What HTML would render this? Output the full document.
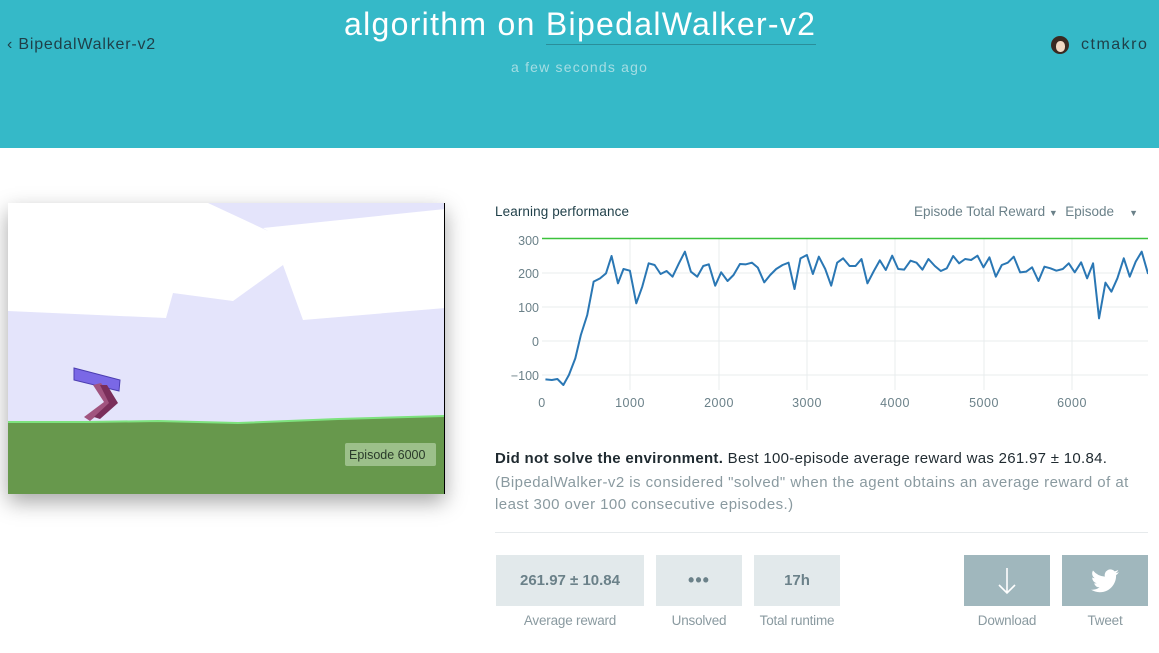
<!DOCTYPE html>
<html><head><meta charset="utf-8"><style>
*{margin:0;padding:0;box-sizing:border-box}
body{width:1159px;height:653px;overflow:hidden;background:#fff;font-family:"Liberation Sans",sans-serif;position:relative}
.hdr{position:absolute;left:0;top:0;width:1159px;height:148px;background:#35b9c8}
.abs{position:absolute;white-space:nowrap}
.box{position:absolute;top:555px;height:51px;background:#e2e9eb;color:#6b8189;font-size:15px;font-weight:bold;display:flex;align-items:center;justify-content:center}
.btn{position:absolute;top:555px;height:51px;background:#a0b7bd;display:flex;align-items:center;justify-content:center}
.lbl{position:absolute;top:613px;font-size:13.5px;color:#8a9aa0;text-align:center;letter-spacing:-0.2px}
</style></head><body>
<div class="hdr"></div>
<div class="abs" style="left:7px;top:36px;font-size:16px;color:#1f3f48;letter-spacing:0.8px">‹ BipedalWalker-v2</div>
<div class="abs" style="left:344px;top:6px;font-size:32px;color:#fff;letter-spacing:1.3px">algorithm on <span style="border-bottom:1px solid #2a8e9a;padding-bottom:2px">BipedalWalker-v2</span></div>
<div class="abs" style="left:511px;top:59px;font-size:14px;color:#a5dde3;letter-spacing:1.2px">a few seconds ago</div>
<div class="abs" style="left:1051px;top:36px;width:18px;height:18px;border-radius:50%;background:#3a2a22;overflow:hidden"><div style="position:absolute;left:5px;top:5px;width:9px;height:11px;border-radius:45%;background:#f1d9c4"></div></div>
<div class="abs" style="left:1081px;top:36px;font-size:16px;color:#1f3f48;letter-spacing:1.5px">ctmakro</div>

<div class="abs" style="left:8px;top:203px;width:437px;height:291px;box-shadow:0 8px 20px rgba(0,0,0,0.35);overflow:hidden;background:#e4e4fb;border-right:1px solid #000">
<svg width="437" height="291" viewBox="0 0 437 291" style="position:absolute;left:0;top:0">
<polygon points="0,0 200,0 260,28 255,25 437,6 437,105 295,117 275,62 225,98 165,90 158,115 0,108" fill="#fff"/>
<polygon points="0,219 80,219 150,218 230,220 330,216 437,213 437,291 0,291" fill="#67984c"/>
<polyline points="0,219 80,219 150,218 230,220 330,216 437,213" fill="none" stroke="#7ee27e" stroke-width="2"/>
<polygon points="66,165 112,177 111,188 66,177" fill="#7a68e6" stroke="#4b3db0" stroke-width="1"/>
<polygon points="85,182 93,180 106,198 82,218 76,214 96,199" fill="#a1547f"/>
<polygon points="92,182 99,182 110,200 92,216 86,214 101,200" fill="#7a2e5a"/>
<rect x="337" y="240" width="91" height="23" rx="2" fill="#9cc08a"/>
<text x="341" y="256" font-family="Liberation Sans" font-size="12.5" fill="#2a3a2a">Episode 6000</text>
</svg></div>

<div class="abs" style="left:495px;top:204px;font-size:13.5px;color:#1f3f48;letter-spacing:0.1px">Learning performance</div>
<div class="abs" style="left:914px;top:204px;font-size:13.5px;color:#6b8189;letter-spacing:0px">Episode Total Reward <span style="font-size:9px">▼</span>&nbsp; Episode &nbsp;&nbsp;&nbsp;<span style="font-size:9px">▼</span></div>
<svg class="abs" style="left:0;top:0" width="1159" height="420">
<defs><clipPath id="c"><rect x="530" y="230" width="618" height="170"/></clipPath></defs>
<g stroke="#e8ecee" stroke-width="1">
<line x1="542" y1="273" x2="1148" y2="273"/><line x1="542" y1="307" x2="1148" y2="307"/><line x1="542" y1="341" x2="1148" y2="341"/><line x1="542" y1="375" x2="1148" y2="375"/>
<line x1="630" y1="238" x2="630" y2="390"/><line x1="719" y1="238" x2="719" y2="390"/><line x1="807" y1="238" x2="807" y2="390"/><line x1="895" y1="238" x2="895" y2="390"/><line x1="984" y1="238" x2="984" y2="390"/><line x1="1072" y1="238" x2="1072" y2="390"/>
</g>
<line x1="542" y1="238.5" x2="1148" y2="238.5" stroke="#3cc23c" stroke-width="1.6"/>
<g font-family="Liberation Sans" font-size="12.5" fill="#6b8189" text-anchor="end">
<text x="539" y="245">300</text><text x="539" y="278">200</text><text x="539" y="312">100</text><text x="539" y="346">0</text><text x="539" y="380">−100</text>
</g>
<g font-family="Liberation Sans" font-size="12.5" fill="#6b8189" text-anchor="middle" letter-spacing="0.5">
<text x="542" y="407">0</text><text x="630" y="407">1000</text><text x="719" y="407">2000</text><text x="807" y="407">3000</text><text x="895" y="407">4000</text><text x="984" y="407">5000</text><text x="1072" y="407">6000</text>
</g>
<g clip-path="url(#c)"><g transform="translate(490,195) scale(0.4265,0.33333)">
<polyline fill="none" stroke="#2a77b4" stroke-width="2" vector-effect="non-scaling-stroke" stroke-linejoin="round" points="130,553 145,555 158,552 172,570 185,540 200,490 213,420 228,360 243,260 258,250 272,235 285,183 300,265 313,222 328,227 343,325 357,275 372,205 386,210 400,237 414,228 428,245 443,205 457,170 471,230 486,245 500,213 513,208 528,272 542,232 557,258 571,240 586,207 600,208 614,203 628,218 643,262 657,240 671,222 686,210 700,203 714,282 728,190 743,180 757,237 771,185 786,222 800,272 814,203 828,190 843,213 857,213 871,192 885,265 900,228 914,196 928,225 943,182 957,222 971,224 986,197 1000,203 1014,224 1028,192 1043,213 1057,228 1071,220 1086,183 1100,205 1114,192 1128,195 1143,182 1157,217 1171,187 1186,245 1200,210 1214,203 1228,185 1243,232 1257,230 1271,217 1286,258 1300,215 1314,220 1328,227 1343,222 1357,205 1371,232 1386,202 1400,250 1414,205 1428,370 1443,263 1457,290 1471,250 1486,190 1500,245 1514,200 1528,170 1543,237"/>
</g></g>
</svg>

<div class="abs" style="left:495px;top:450px;font-size:15px;color:#1f2a30;letter-spacing:0.3px"><b>Did not solve the environment.</b> Best 100-episode average reward was 261.97 ± 10.84.</div>
<div class="abs" style="left:495px;top:472px;font-size:15px;color:#8a9aa0;letter-spacing:0.45px;line-height:22px">(BipedalWalker-v2 is considered "solved" when the agent obtains an average reward of at<br>least 300 over 100 consecutive episodes.)</div>
<div class="abs" style="left:495px;top:532px;width:653px;height:1px;background:#e6eaec"></div>

<div class="box" style="left:496px;width:148px;letter-spacing:0px">261.97 ± 10.84</div>
<div class="box" style="left:656px;width:86px;font-size:18px;letter-spacing:1px">•••</div>
<div class="box" style="left:754px;width:86px">17h</div>
<div class="btn" style="left:964px;width:86px"><svg width="20" height="30" viewBox="0 0 20 30"><path d="M10 2V27M2 19L10 27L18 19" fill="none" stroke="#fff" stroke-width="1.6"/></svg></div>
<div class="btn" style="left:1062px;width:86px"><svg width="28" height="24" viewBox="0 0 24 20"><path d="M24 2.4a10 10 0 0 1-2.8.8 5 5 0 0 0 2.2-2.7 10 10 0 0 1-3.1 1.2A4.9 4.9 0 0 0 11.9 6.200 14 14 0 0 1 1.7 1 4.9 4.9 0 0 0 3.2 7.6 4.9 4.9 0 0 1 1 7v.1a4.9 4.9 0 0 0 3.9 4.8 5 5 0 0 1-2.2.1 4.9 4.9 0 0 0 4.6 3.4A9.9 9.9 0 0 1 0 17.4 14 14 0 0 0 7.5 19.6c9.1 0 14-7.5 14-14v-.6A10 10 0 0 0 24 2.4z" fill="#fff"/></svg></div>

<div class="lbl" style="left:496px;width:148px">Average reward</div>
<div class="lbl" style="left:656px;width:86px">Unsolved</div>
<div class="lbl" style="left:750px;width:94px">Total runtime</div>
<div class="lbl" style="left:964px;width:86px">Download</div>
<div class="lbl" style="left:1062px;width:86px">Tweet</div>
</body></html>
